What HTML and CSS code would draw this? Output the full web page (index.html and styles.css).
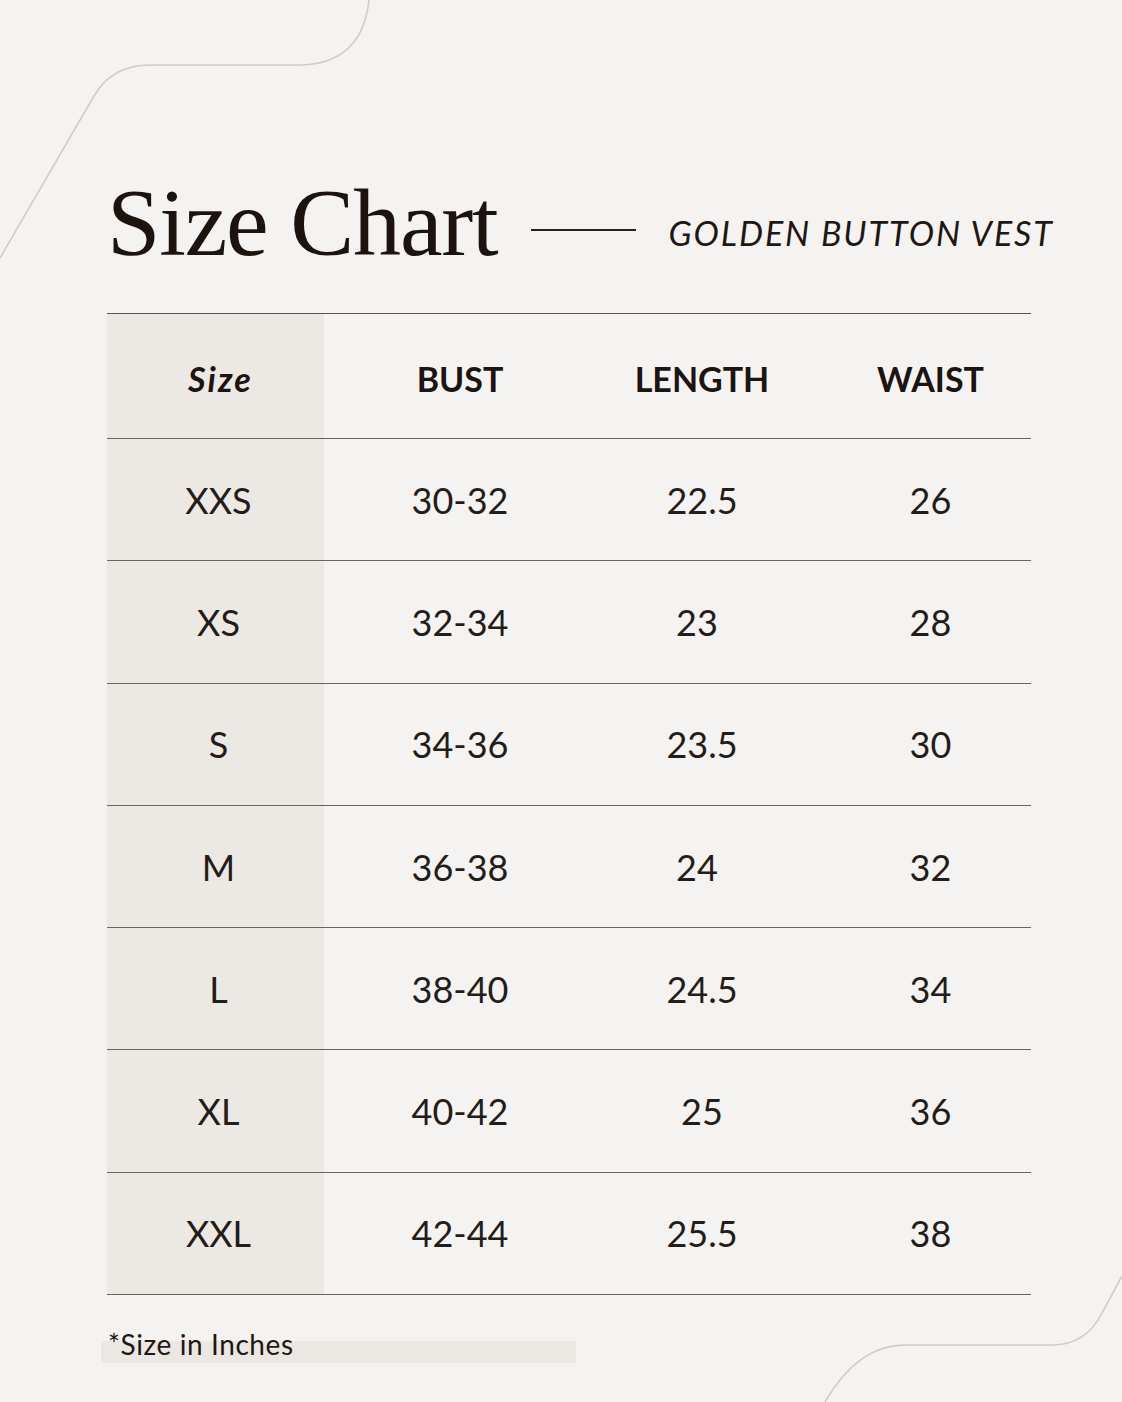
FILE: index.html
```html
<!DOCTYPE html>
<html lang="en">
<head>
<meta charset="utf-8">
<title>Size Chart — Golden Button Vest</title>
<link rel="stylesheet" href="styles.css">
</head>
<body>
<div class="page">
  <svg class="deco" width="1122" height="1402" viewBox="0 0 1122 1402" aria-hidden="true">
    <path d="M0,258 L94,96 Q112,65 150,65 L298,65 Q362,65 369,0" />
    <path d="M825,1402 Q858,1345 905,1345 L1052,1345 Q1086,1345 1102,1313 L1122,1276" />
  </svg>

  <header class="head">
    <h1 class="title">Size Chart</h1>
    <span class="rule"></span>
    <span class="subtitle">GOLDEN BUTTON VEST</span>
  </header>

  <div class="chart">
    <div class="row header">
      <div class="cell c1"><em>Size</em></div>
      <div class="cell c2">BUST</div>
      <div class="cell c3">LENGTH</div>
      <div class="cell c4">WAIST</div>
    </div>
    <div class="row"><div class="cell c1">XXS</div><div class="cell c2">30-32</div><div class="cell c3">22.5</div><div class="cell c4">26</div></div>
    <div class="row"><div class="cell c1">XS</div><div class="cell c2">32-34</div><div class="cell c3 s">23</div><div class="cell c4">28</div></div>
    <div class="row"><div class="cell c1">S</div><div class="cell c2">34-36</div><div class="cell c3">23.5</div><div class="cell c4">30</div></div>
    <div class="row"><div class="cell c1">M</div><div class="cell c2">36-38</div><div class="cell c3 s">24</div><div class="cell c4">32</div></div>
    <div class="row"><div class="cell c1">L</div><div class="cell c2">38-40</div><div class="cell c3">24.5</div><div class="cell c4">34</div></div>
    <div class="row"><div class="cell c1">XL</div><div class="cell c2">40-42</div><div class="cell c3">25</div><div class="cell c4">36</div></div>
    <div class="row"><div class="cell c1">XXL</div><div class="cell c2">42-44</div><div class="cell c3">25.5</div><div class="cell c4">38</div></div>
  </div>

  <p class="note"><span>*Size in Inches</span></p>
</div>
</body>
</html>
```

FILE: styles.css
```css
html, body {
  margin: 0;
  padding: 0;
  background: #f4f3f1;
}

.page {
  position: relative;
  width: 1122px;
  height: 1402px;
  overflow: hidden;
  box-sizing: border-box;
  padding: 175px 0 0 107px;
  color: #1f1713;
  font-family: "Lato", "Open Sans", sans-serif;
}

.deco {
  position: absolute;
  left: 0;
  top: 0;
  fill: none;
  stroke: #d5cac4;
  stroke-width: 1.6;
}

.head {
  position: relative;
  display: flex;
  align-items: center;
  gap: 33px;
  height: 96px;
}

.title {
  margin: 0;
  font-family: "Liberation Serif", "Times New Roman", serif;
  font-weight: 400;
  font-size: 96px;
  line-height: 1;
  letter-spacing: -1.2px;
  color: #1d130e;
}

.rule {
  width: 105px;
  height: 1.5px;
  background: #2a201b;
  margin-top: 14px;
}

.subtitle {
  font-style: italic;
  font-size: 34px;
  line-height: 1;
  margin-top: 20px;
  letter-spacing: 1.9px;
  color: #1f1713;
}

.chart {
  position: relative;
  margin-top: 42px;
  width: 924px;
  border-top: 1.5px solid #5f5550;
}

.row {
  display: grid;
  grid-template-columns: 217px 272px 212px 223px;
  height: 122.3px;
  box-sizing: border-box;
  border-bottom: 1.5px solid #6e645e;
}

.row.header {
  height: 125px;
}

.cell {
  display: flex;
  align-items: center;
  justify-content: center;
  font-size: 36px;
  font-weight: 400;
  color: #241c18;
}

.header .cell {
  font-size: 34px;
  font-weight: 700;
  padding-top: 4px;
  color: #1c1410;
}

.header .c1 em {
  letter-spacing: 2px;
  padding-left: 4px;
}

.c1 {
  background: #ece9e5;
  padding-left: 6px;
}

.c4 {
  padding-left: 22px;
}

.c3.s {
  padding-right: 10px;
}

.note {
  position: relative;
  margin: 34px 0 0 1px;
  font-size: 28px;
  line-height: 30px;
  letter-spacing: 0.6px;
  color: #1f1713;
}

.note::before {
  content: "";
  position: absolute;
  left: -7px;
  top: 12px;
  width: 475px;
  height: 22px;
  background: #ebe8e4;
}

.note span {
  position: relative;
}
```
